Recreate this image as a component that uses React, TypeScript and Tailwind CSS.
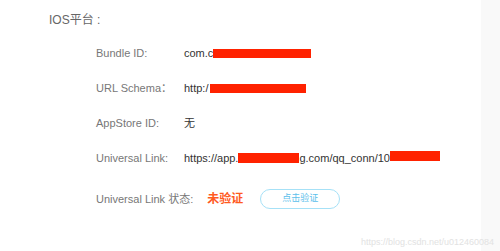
export default function App() {
  const rows = [
    { label: 'Bundle ID:', value: <>com.c<span className="inline-block w-[98px] h-[9px] bg-[#ff2200] align-[-1px]" /></> },
    { label: 'URL Schema：', value: <>http:/<span className="inline-block w-[96px] h-[9px] ml-[2px] bg-[#ff2200] align-[-1px]" /></> },
    { label: 'AppStore ID:', value: <>无</> },
    {
      label: 'Universal Link:',
      value: (
        <>
          https://app.
          <span className="inline-block w-[61px] h-[10px] bg-[#ff2200] align-[-1px]" />
          g.com/qq_conn/10
          <span className="inline-block w-[50px] h-[10px] bg-[#ff2200] align-[1px]" />
        </>
      ),
    },
  ];

  return (
    <div
      className="relative w-[500px] h-[251px] flex overflow-hidden bg-white"
      style={{ fontFamily: '"Liberation Sans", "Noto Sans CJK SC", sans-serif' }}
    >
      <div className="flex-1 flex flex-col">
        {/* Title */}
        <div className="mt-[12px] ml-[49px] h-[16px] leading-[16px] text-[12px] text-[#666]">IOS平台 :</div>

        {/* Info rows */}
        <div className="mt-[8px] ml-[96px] flex flex-col">
          {rows.map((row) => (
            <div key={row.label} className="h-[35px] flex items-center text-[11px]">
              <div className="w-[88px] text-[#777]">{row.label}</div>
              <div className="text-[#333] whitespace-nowrap">{row.value}</div>
            </div>
          ))}

          {/* Status row */}
          <div className="h-[46px] flex items-center text-[11px]">
            <div className="text-[#777]">Universal Link 状态:</div>
            <div className="ml-[14px] text-[12px] font-bold text-[#ff5a1f]">未验证</div>
            <button className="ml-[17px] w-[80px] h-[20px] rounded-full border border-[#a6e1f7] bg-white text-[9px] text-[#5bc0eb] flex items-center justify-center">
              点击验证
            </button>
          </div>
        </div>
      </div>

      <div className="w-[19px] bg-[#f9f9f9]" />

      {/* Watermark */}
      <div className="absolute left-[361px] top-[236px] text-[9px] leading-[12px] text-[#e2e2e2] whitespace-nowrap">
        https://blog.csdn.net/u012460084
      </div>
    </div>
  );
}
